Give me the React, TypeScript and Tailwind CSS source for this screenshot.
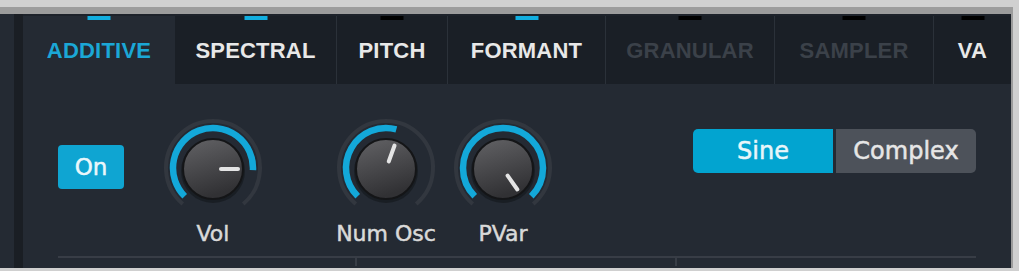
import React from 'react';

type Tab = { label: string; width: number; led: 'on' | 'off'; state: 'active' | 'normal' | 'disabled' };

const tabs: Tab[] = [
  { label: 'ADDITIVE', width: 152, led: 'on', state: 'active' },
  { label: 'SPECTRAL', width: 161, led: 'on', state: 'normal' },
  { label: 'PITCH', width: 111, led: 'off', state: 'normal' },
  { label: 'FORMANT', width: 158, led: 'on', state: 'normal' },
  { label: 'GRANULAR', width: 169, led: 'off', state: 'disabled' },
  { label: 'SAMPLER', width: 159, led: 'off', state: 'disabled' },
  { label: 'VA', width: 78, led: 'off', state: 'normal' },
];

const C = 55;

function pt(angle: number, r: number) {
  const a = (angle * Math.PI) / 180;
  return [C + r * Math.sin(a), C - r * Math.cos(a)];
}

function arc(a1: number, a2: number, r: number) {
  const [x1, y1] = pt(a1, r);
  const [x2, y2] = pt(a2, r);
  const large = a2 - a1 > 180 ? 1 : 0;
  return `M ${x1} ${y1} A ${r} ${r} 0 ${large} 1 ${x2} ${y2}`;
}

function Knob({ label, value, pointer, id }: { label: string; value: number; pointer: number; id: string }) {
  const [px1, py1] = pt(pointer, 8);
  const [px2, py2] = pt(pointer, 25);
  return (
    <div className="flex flex-col items-center w-[110px] mt-[29px]">
      <svg width="110" height="110" viewBox="0 0 110 110">
        <defs>
          <linearGradient id={id} x1="0" y1="0" x2="0.3" y2="1">
            <stop offset="0" stopColor="#636366" />
            <stop offset="1" stopColor="#313134" />
          </linearGradient>
        </defs>
        <path d={arc(-140, 140, 47)} stroke="#32373f" strokeWidth="4" fill="none" />
        <path d={arc(-135, value, 40)} stroke="#13a8d9" strokeWidth="6.5" fill="none" />
        <circle cx={C} cy={C + 3} r="32" fill="#16191e" opacity="0.7" />
        <circle cx={C} cy={C + 1} r="30" fill={`url(#${id})`} stroke="#141517" strokeWidth="2" />
        <line x1={px1} y1={py1 + 1} x2={px2} y2={py2 + 1} stroke="#e4e4e4" strokeWidth="4" strokeLinecap="round" />
      </svg>
      <div className="mt-[-2px] text-[22px] leading-[26px] text-[#d9d9d9] [-webkit-text-stroke:0.5px_#d9d9d9] font-['DejaVu_Sans',sans-serif] whitespace-nowrap">
        {label}
      </div>
    </div>
  );
}

export default function App() {
  return (
    <div className="w-[1019px] h-[271px] bg-[#d0d0d0] pt-[7px] overflow-hidden">
      <div className="w-[1013px] h-[261px] bg-[#9c9c9c] pt-[7px] pr-[2px]">
        <div className="h-[254px] bg-[#242a33] flex">
          <div className="w-[14px]" />
          <div className="w-[9px] bg-[#1a1e24]" />
          <div className="flex-1 flex flex-col">
            {/* tab strip */}
            <div className="flex h-[70px] pt-[2px] bg-[#1d222a]">
              {tabs.map((t, i) => (
                <div
                  key={t.label}
                  style={{ width: t.width }}
                  className={`relative flex items-center justify-center ${
                    t.state === 'active' ? 'bg-[#242a33]' : 'bg-[#1a1f26]'
                  } ${i > 1 ? 'border-l border-[#2b3139]' : ''}`}
                >
                  <div
                    className={`absolute top-0 left-1/2 -translate-x-1/2 w-[23px] h-[4px] ${
                      t.led === 'on' ? 'bg-[#12aee0]' : 'bg-black'
                    }`}
                  />
                  <span
                    className={`text-[22px] tracking-[0.2px] font-bold font-['Liberation_Sans',sans-serif] ${
                      t.state === 'active'
                        ? 'text-[#1ba7d6]'
                        : t.state === 'disabled'
                        ? 'text-[#3b4149]'
                        : 'text-[#e8e8e8]'
                    }`}
                  >
                    {t.label}
                  </span>
                </div>
              ))}
            </div>

            {/* controls */}
            <div className="flex items-start h-[172px] pl-[35px] pr-[35px]">
              <button className="mt-[61px] w-[66px] h-[44px] rounded-[4px] bg-[#0fa5d2] text-[#eaf7fb] [-webkit-text-stroke:0.5px_#eaf7fb] text-[23px] font-['DejaVu_Sans',sans-serif]">
                On
              </button>
              <div className="ml-[34px]">
                <Knob id="k1" label="Vol" value={93} pointer={90} />
              </div>
              <div className="ml-[63px]">
                <Knob id="k2" label="Num Osc" value={15} pointer={20} />
              </div>
              <div className="ml-[7px]">
                <Knob id="k3" label="PVar" value={135} pointer={145} />
              </div>
              <div className="ml-auto mt-[45px] flex h-[44px] rounded-[5px] overflow-hidden font-['DejaVu_Sans',sans-serif] text-[24px]">
                <div className="w-[140px] bg-[#02a4d0] text-[#e8f6fa] [-webkit-text-stroke:0.5px_#e8f6fa] flex items-center justify-center">Sine</div>
                <div className="w-[3px] bg-[#242a33]" />
                <div className="w-[140px] bg-[#4d525a] text-[#e6e6e6] [-webkit-text-stroke:0.5px_#e6e6e6] flex items-center justify-center">Complex</div>
              </div>
            </div>

            {/* bottom rule */}
            <div className="mx-[35px] h-[2px] bg-[#383d46]" />
            <div className="flex ml-[35px] h-[8px]">
              <div className="w-[297px]" />
              <div className="w-[2px] bg-[#383d46]" />
              <div className="w-[318px]" />
              <div className="w-[2px] bg-[#383d46]" />
            </div>
          </div>
        </div>
      </div>
    </div>
  );
}
